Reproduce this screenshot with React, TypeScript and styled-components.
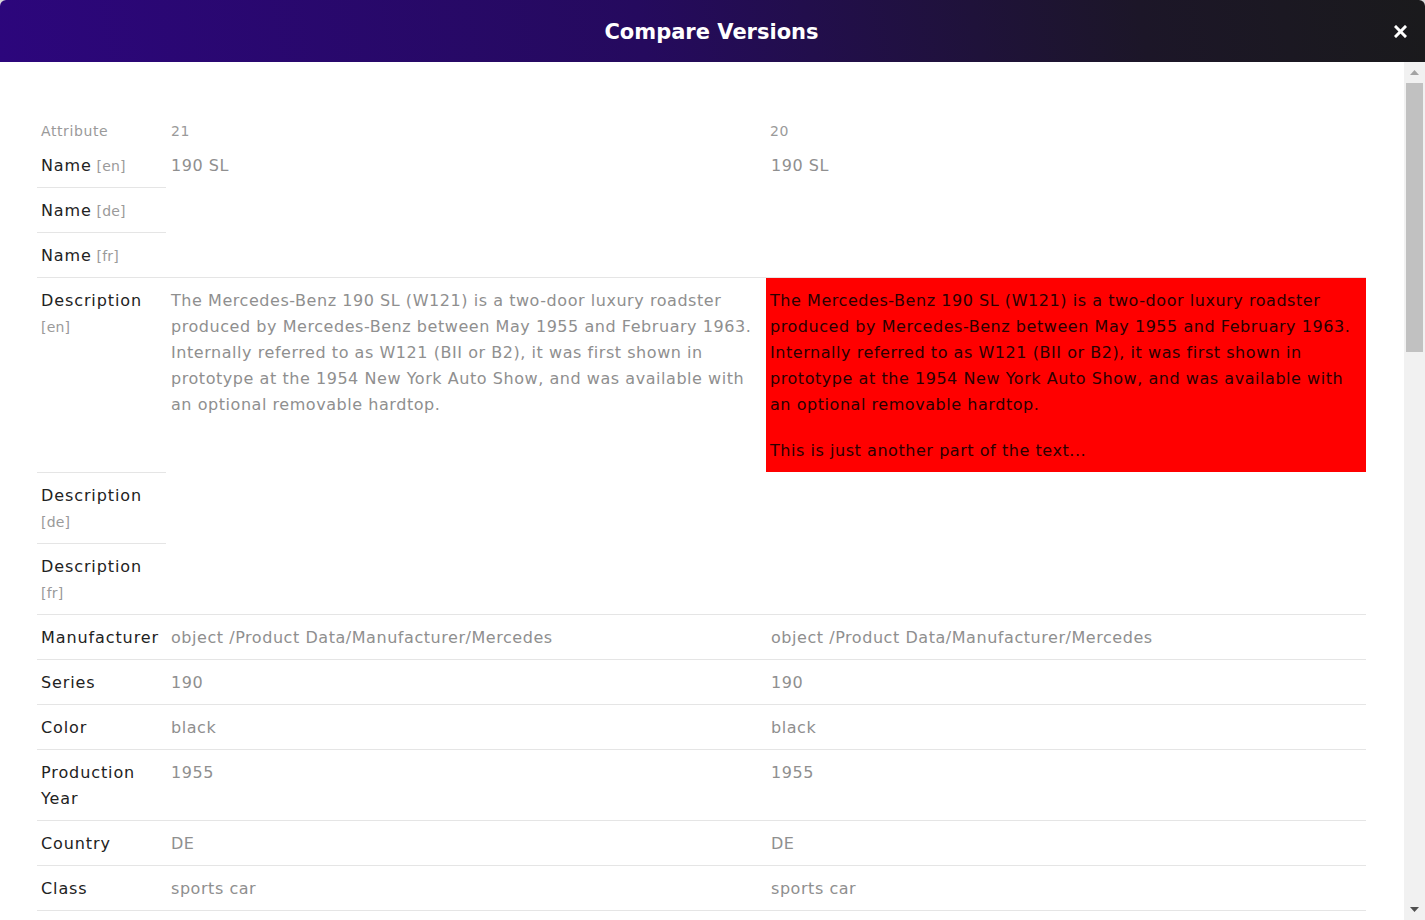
import React from 'react';
import styled, { createGlobalStyle } from 'styled-components';

const GlobalStyle = createGlobalStyle`
  html, body {
    margin: 0;
    padding: 0;
    height: 100%;
    overflow: hidden;
    background: #d9d9d9;
  }
  #root {
    height: 100%;
  }
`;

const Modal = styled.div`
  height: 920px;
  display: flex;
  flex-direction: column;
  background: #fff;
  border-radius: 6px 6px 0 0;
  overflow: hidden;
  font-family: 'DejaVu Sans', 'Liberation Sans', sans-serif;
`;

const Header = styled.header`
  height: 62px;
  flex-shrink: 0;
  display: grid;
  grid-template-columns: 1fr auto 1fr;
  align-items: center;
  padding: 0 17px;
  background: linear-gradient(80deg, #2c067c 0%, #250a5e 45%, #1c1628 80%, #1a1a1c 100%);
`;

const Title = styled.h1`
  grid-column: 2;
  margin: 2px 0 0 -2px;
  color: #fff;
  font-size: 21px;
  font-weight: 700;
  letter-spacing: 0;
`;

const CloseButton = styled.button`
  grid-column: 3;
  justify-self: end;
  width: 14px;
  height: 14px;
  padding: 0;
  margin-right: 1px;
  border: none;
  background: none;
  cursor: pointer;
  display: flex;
  align-items: center;
  justify-content: center;
`;

const BodyWrap = styled.div`
  flex: 1;
  min-height: 0;
  display: flex;
`;

const Content = styled.div`
  flex: 1;
  overflow: hidden;
  padding: 57px 38px 40px 37px;
`;

const ScrollTrack = styled.div`
  width: 21px;
  flex-shrink: 0;
  background: #f1f1f1;
  display: flex;
  flex-direction: column;
  align-items: center;
`;

const ScrollArrow = styled.div`
  height: 21px;
  width: 100%;
  display: flex;
  align-items: center;
  justify-content: center;
`;

const ScrollThumb = styled.div`
  width: 17px;
  height: 269px;
  background: #c1c1c1;
`;

const ScrollSpacer = styled.div`
  flex: 1;
`;

const Table = styled.table`
  width: 100%;
  border-collapse: collapse;
  table-layout: fixed;
`;

const HeadCell = styled.th<{ $shift?: number }>`
  text-align: left;
  font-weight: 400;
  font-size: 14px;
  line-height: 23px;
  letter-spacing: 0.6px;
  color: #9a9a9a;
  padding: 1px 4px 0 ${p => p.$shift ?? 4}px;
`;

const AttrCell = styled.td<{ $first?: boolean }>`
  vertical-align: top;
  padding: 10px 4px 8px;
  font-size: 16px;
  line-height: 26px;
  letter-spacing: 0.9px;
  color: #222;
  border-top: ${p => (p.$first ? 'none' : '1px solid #e5e5e5')};
`;

const Lang = styled.span`
  font-size: 14px;
  letter-spacing: 0.2px;
  color: #9a9a9a;
`;

const ValueCell = styled.td<{ $first?: boolean; $empty?: boolean; $changed?: boolean }>`
  vertical-align: top;
  padding: 10px 4px 8px ${p => (p.$changed ? 4 : 5)}px;
  font-size: 16px;
  line-height: 26px;
  letter-spacing: 0.55px;
  color: ${p => (p.$changed ? '#2a0000' : '#8f8f8f')};
  background: ${p => (p.$changed ? '#ff0000' : 'transparent')};
  border-top: ${p => (p.$first || p.$empty ? 'none' : '1px solid #e5e5e5')};
`;

const Para = styled.p`
  margin: 0 0 20px;
  &:last-child {
    margin-bottom: 0;
  }
`;

type Entry = {
  label: string;
  lang?: string;
  left: string[];
  right: string[];
};

const desc =
  'The Mercedes-Benz 190 SL (W121) is a two-door luxury roadster produced by Mercedes-Benz between May 1955 and February 1963. Internally referred to as W121 (BII or B2), it was first shown in prototype at the 1954 New York Auto Show, and was available with an optional removable hardtop.';

const rows: Entry[] = [
  { label: 'Name', lang: 'en', left: ['190 SL'], right: ['190 SL'] },
  { label: 'Name', lang: 'de', left: [], right: [] },
  { label: 'Name', lang: 'fr', left: [], right: [] },
  { label: 'Description', lang: 'en', left: [desc], right: [desc, 'This is just another part of the text...'] },
  { label: 'Description', lang: 'de', left: [], right: [] },
  { label: 'Description', lang: 'fr', left: [], right: [] },
  { label: 'Manufacturer', left: ['object /Product Data/Manufacturer/Mercedes'], right: ['object /Product Data/Manufacturer/Mercedes'] },
  { label: 'Series', left: ['190'], right: ['190'] },
  { label: 'Color', left: ['black'], right: ['black'] },
  { label: 'Production Year', left: ['1955'], right: ['1955'] },
  { label: 'Country', left: ['DE'], right: ['DE'] },
  { label: 'Class', left: ['sports car'], right: ['sports car'] },
  { label: 'Body Style', left: ['roadster'], right: ['roadster'] },
  { label: 'Engine', left: ['1.9 L M121 I4'], right: ['1.9 L M121 I4'] },
  { label: 'Power', left: ['105 hp'], right: ['105 hp'] },
];

const sameText = (a: string[], b: string[]) => a.join('|') === b.join('|');

const CloseIcon = () => (
  <svg width="13" height="13" viewBox="0 0 13 13" fill="none" stroke="#fff" strokeWidth="3" strokeLinecap="square">
    <line x1="2" y1="2" x2="11" y2="11" />
    <line x1="11" y1="2" x2="2" y2="11" />
  </svg>
);

const Arrow = ({ up, color }: { up?: boolean; color: string }) => (
  <svg width="9" height="5" viewBox="0 0 9 5">
    <polygon points={up ? '4.5,0 9,5 0,5' : '0,0 9,0 4.5,5'} fill={color} />
  </svg>
);

const renderValue = (lines: string[]) => lines.map((t, i) => <Para key={i}>{t}</Para>);

const App: React.FC = () => {
  return (
    <>
      <GlobalStyle />
      <Modal>
        <Header>
          <Title>Compare Versions</Title>
          <CloseButton aria-label="Close">
            <CloseIcon />
          </CloseButton>
        </Header>
        <BodyWrap>
          <Content>
            <Table>
              <colgroup>
                <col style={{ width: 129 }} />
                <col />
                <col />
              </colgroup>
              <thead>
                <tr>
                  <HeadCell>Attribute</HeadCell>
                  <HeadCell $shift={5}>21</HeadCell>
                  <HeadCell>20</HeadCell>
                </tr>
              </thead>
              <tbody>
                {rows.map((r, i) => {
                  const first = i === 0;
                  const changed = !sameText(r.left, r.right);
                  return (
                    <tr key={r.label + (r.lang || '') + i}>
                      <AttrCell $first={first}>
                        {r.label}
                        {r.lang && <Lang> [{r.lang}]</Lang>}
                      </AttrCell>
                      <ValueCell $first={first} $empty={r.left.length === 0}>
                        {renderValue(r.left)}
                      </ValueCell>
                      <ValueCell $first={first} $empty={r.right.length === 0} $changed={changed}>
                        {renderValue(r.right)}
                      </ValueCell>
                    </tr>
                  );
                })}
              </tbody>
            </Table>
          </Content>
          <ScrollTrack>
            <ScrollArrow>
              <Arrow up color="#a3a3a3" />
            </ScrollArrow>
            <ScrollThumb />
            <ScrollSpacer />
            <ScrollArrow>
              <Arrow color="#505050" />
            </ScrollArrow>
          </ScrollTrack>
        </BodyWrap>
      </Modal>
    </>
  );
};

export default App;
